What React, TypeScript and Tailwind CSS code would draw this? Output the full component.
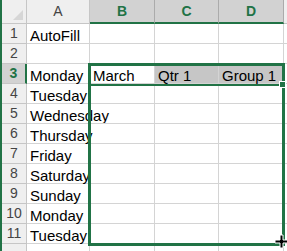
import React from "react";

const rows: string[][] = [
  ["AutoFill", "", "", ""],
  ["", "", "", ""],
  ["Monday", "March", "Qtr 1", "Group 1"],
  ["Tuesday", "", "", ""],
  ["Wednesday", "", "", ""],
  ["Thursday", "", "", ""],
  ["Friday", "", "", ""],
  ["Saturday", "", "", ""],
  ["Sunday", "", "", ""],
  ["Monday", "", "", ""],
  ["Tuesday", "", "", ""],
  ["", "", "", ""],
];

const cols = ["A", "B", "C", "D"];

export default function App() {
  return (
    <div
      className="relative w-[287px] h-[251px] overflow-hidden bg-white border-l-2 border-[#217346]"
      style={{ fontFamily: '"Liberation Sans", Arial, sans-serif' }}
    >
      <div className="grid grid-cols-[25px_63px_65px_64px_65px_1fr] grid-rows-[24px_repeat(12,20px)] text-[15px] text-black">
        {/* header row */}
        <div className="relative bg-[#efefef] border-r border-b border-[#c6c6c6]">
          <div className="absolute right-[3px] bottom-[3px] w-0 h-0 border-l-[10px] border-l-transparent border-b-[10px] border-b-[#d6d6d6]" />
        </div>
        {cols.map((c) => {
          const sel = c !== "A";
          return (
            <div
              key={c}
              className={
                sel
                  ? "flex items-center justify-center bg-[#d2d2d2] text-[#217346] font-bold border-r border-[#ababab] border-b-2 border-b-[#217346] text-[14px]"
                  : "flex items-center justify-center bg-[#efefef] text-[#444] border-r border-b border-[#c6c6c6] text-[14px]"
              }
            >
              {c}
            </div>
          );
        })}
        <div className="bg-[#efefef] border-b border-[#c6c6c6]" />

        {rows.map((r, i) => {
          const n = i + 1;
          const sel = n === 3;
          return (
            <React.Fragment key={n}>
              <div
                className={
                  sel
                    ? "flex items-center justify-center bg-[#d2d2d2] text-[#217346] font-bold border-r-2 border-[#217346] border-b border-b-[#c6c6c6] text-[14px]"
                    : "flex items-center justify-center bg-[#efefef] text-[#444] border-r border-b border-[#c6c6c6] text-[14px]"
                }
              >
                {n < 12 ? n : ""}
              </div>
              {r.map((v, j) => (
                <div
                  key={j}
                  className={
                    "flex items-end pl-[3px] leading-none whitespace-nowrap border-r border-b border-[#d4d4d4] " +
                    (sel && j > 1 ? "bg-[#c6c6c6]" : "")
                  }
                >
                  {v}
                </div>
              ))}
              <div className="border-b border-[#d4d4d4]" />
            </React.Fragment>
          );
        })}
      </div>

      {/* drag outline B3:D11 */}
      <div className="absolute left-[86px] top-[63px] w-[197px] h-[183px] border-[3px] border-[#217346] pointer-events-none" />
      {/* selection bottom edge B3:D3 */}
      <div className="absolute left-[86px] top-[84px] w-[194px] h-[2px] bg-[#217346]" />
      {/* fill handle */}
      <div className="absolute left-[277px] top-[81px] w-[7px] h-[7px] bg-[#217346] border border-white" />

      {/* cursor */}
      <svg className="absolute left-[272px] top-[234px]" width="15" height="15" viewBox="0 0 15 15">
        <path d="M6 1h3v5h5v3h-5v5h-3v-5h-5v-3h5z" fill="#000" stroke="#fff" strokeWidth="1" />
      </svg>
    </div>
  );
}
